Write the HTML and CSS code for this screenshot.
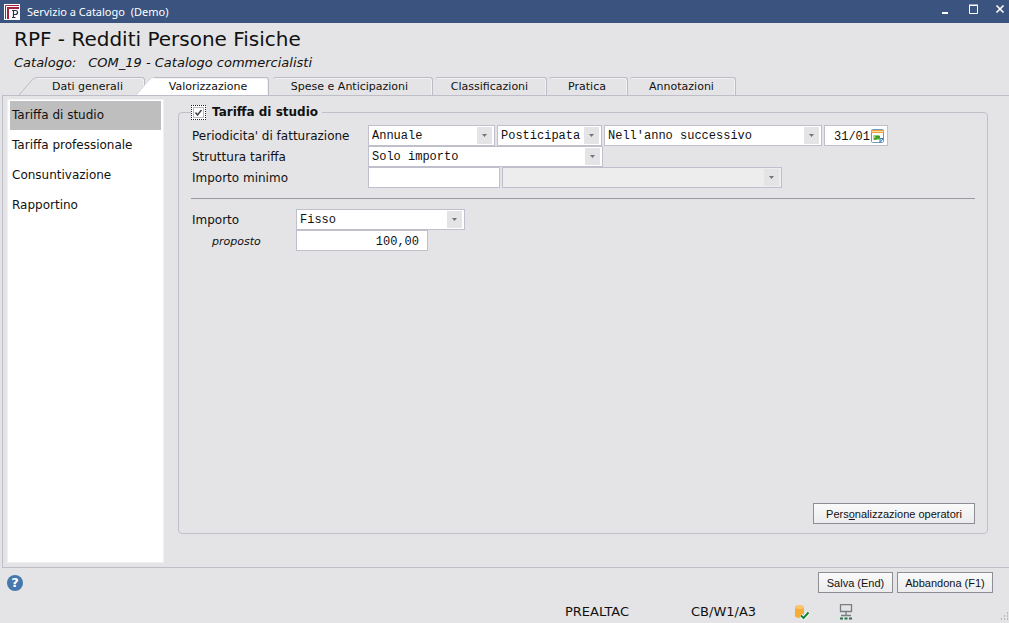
FILE: index.html
```html
<!DOCTYPE html>
<html lang="it">
<head>
<meta charset="utf-8">
<title>Servizio a Catalogo (Demo)</title>
<link rel="stylesheet" href="styles.css">
</head>
<body>
<header class="titlebar">
  <svg class="app-icon" viewBox="0 0 16 16" aria-hidden="true"><rect width="16" height="16" fill="#fff"/><path d="M1.500 15V1.500H15" fill="none" stroke="#a3243f"/><path d="M4 15V4h11" fill="none" stroke="#a3243f" stroke-width="2"/><rect x="6" y="5" width="10" height="11" fill="#fff"/><path d="M9.500 13.500v-7h2a2 2 0 0 1 0 4h-2M8 6.500h2M8 13.500h3.500" fill="none" stroke="#2d3550" stroke-width="1.200"/></svg>
  <span class="window-title">Servizio a Catalogo&nbsp; (Demo)</span>
  <div class="window-controls">
    <button type="button" aria-label="Riduci"><svg viewBox="0 0 10 10"><path d="M1 9h6" stroke="#fff" stroke-width="2"/></svg></button>
    <button type="button" aria-label="Ingrandisci"><svg viewBox="0 0 10 10"><path d="M1.500 1.500h8v8h-8zM1 1h9" fill="none" stroke="#fff"/></svg></button>
    <button type="button" aria-label="Chiudi"><svg viewBox="0 0 10 10"><path d="M1.500 1.500l7 7m0-7l-7 7" stroke="#fff" stroke-width="1.600"/></svg></button>
  </div>
</header>

<div class="heading">
  <h1>RPF - Redditi Persone Fisiche</h1>
  <p><span>Catalogo:</span><span>COM_19 - Catalogo commercialisti</span></p>
</div>

<nav class="tabs" role="tablist">
  <button type="button" role="tab" class="tab tab-first"><svg class="slope" viewBox="0 0 18 18"><path d="M0 18 13 3Q15.500 .5 18 .5V18z" fill="#e4e4e6"/><path d="M0 18 13 3Q15.500 .5 18 .5" fill="none" stroke="#bcbcc6"/></svg><span>Dati generali</span></button>
  <button type="button" role="tab" class="tab tab-active" aria-selected="true"><svg class="slope" viewBox="0 0 18 18"><path d="M0 18 13 3Q15.500 0 18 0V18z" fill="#fff"/><path d="M0 18 13 3Q15.500 .5 18 .5" fill="none" stroke="#d2d2d8"/></svg><span>Valorizzazione</span></button>
  <button type="button" role="tab" class="tab tab-spese"><span>Spese e Anticipazioni</span></button>
  <button type="button" role="tab" class="tab tab-class"><span>Classificazioni</span></button>
  <button type="button" role="tab" class="tab tab-pratica"><span>Pratica</span></button>
  <button type="button" role="tab" class="tab tab-note"><span>Annotazioni</span></button>
</nav>

<main class="panel">
  <nav class="side-list">
    <a href="#studio" class="selected">Tariffa di studio</a>
    <a href="#professionale">Tariffa professionale</a>
    <a href="#consuntivazione">Consuntivazione</a>
    <a href="#rapportino">Rapportino</a>
  </nav>
  <fieldset class="group">
    <legend><label><input type="checkbox" checked><span>Tariffa di studio</span></label></legend>
    <div class="row">
      <label for="periodicita">Periodicita' di fatturazione</label>
      <select id="periodicita" class="w-annual"><option>Annuale</option></select>
      <select class="w-mode" aria-label="Modalita'"><option>Posticipata</option></select>
      <select class="w-year" aria-label="Anno"><option>Nell'anno successivo</option></select>
      <span class="date-field">
        <input type="text" value="31/01" aria-label="Data">
        <button type="button" aria-label="Calendario"><svg viewBox="0 0 13 14"><rect x=".5" y=".5" width="12" height="13" rx="1" fill="#fff" stroke="#6b9bc4"/><path d="M0 1h13v3H0z" fill="#f0a03c"/><path d="M1 2.500h11" stroke="#ffd795"/><path d="M2 6h6v5H2z" fill="#a9d877"/><path d="M3 10h2V7.500h4M5 9h4" fill="none" stroke="#3f9a2c" stroke-width="1.300"/><path d="M12.500 9.500H9v4z" fill="#d4e8fa" stroke="#3c78b4"/></svg></button>
      </span>
    </div>
    <div class="row">
      <label for="struttura">Struttura tariffa</label>
      <select id="struttura" class="w-structure"><option>Solo importo</option></select>
    </div>
    <div class="row">
      <label for="minimo">Importo minimo</label>
      <input id="minimo" class="w-amount" type="text">
      <select class="w-minimum" aria-label="Tipo importo minimo" disabled><option></option></select>
    </div>
    <hr>
    <div class="row row-short">
      <label for="importo">Importo</label>
      <select id="importo" class="w-fixed"><option>Fisso</option></select>
    </div>
    <div class="row row-short">
      <label class="sub" for="proposto">proposto</label>
      <input id="proposto" class="w-amount number" type="text" value="100,00">
    </div>
    <button type="button" class="btn btn-operators">Pers<u>o</u>nalizzazione operatori</button>
  </fieldset>
</main>

<div class="actions">
  <button type="button" class="help" aria-label="Aiuto">?</button>
  <button type="button" class="btn btn-save">Salva (End)</button>
  <button type="button" class="btn btn-cancel">Abbandona (F1)</button>
</div>

<footer class="status">
  <span class="company">PREALTAC</span>
  <span class="station">CB/W1/A3</span>
  <svg class="db" viewBox="0 0 16 16" aria-hidden="true"><path d="M0 3v9c0 2.500 9 2.500 9 0V3z" fill="#f6ad38"/><ellipse cx="4.500" cy="3" rx="4.500" ry="2" fill="#fac46a"/><path d="M6 11.500l2.500 2.500 5-5.500" fill="none" stroke="#fff" stroke-width="4"/><path d="M6 11.500l2.500 2.500 5-5.500" fill="none" stroke="#158432" stroke-width="2"/></svg>
  <svg class="net" viewBox="0 0 14 16" aria-hidden="true"><path d="M1.500 .5h11v7h-11zM7 8v3M2 11.500h10" fill="none" stroke="#777d80" stroke-width="1.300"/><path d="M1 14.500h12" stroke="#28744f" stroke-width="2" stroke-dasharray="3 1.500"/></svg>
  <svg class="grip" viewBox="0 0 9 9" aria-hidden="true"><path d="M7 1h2M4 4h2M7 4h2M1 7h2M4 7h2M7 7h2" stroke="#b4b4ba" stroke-width="2" stroke-dasharray="1 1"/></svg>
</footer>
</body>
</html>
```
FILE: styles.css
```css
* { box-sizing: border-box; }

body {
  margin: 0;
  min-height: 100vh;
  display: flex;
  flex-direction: column;
  background: #e4e4e6;
  color: #111;
  font: 12px/15px "DejaVu Sans", sans-serif;
}

button, input, select { font: inherit; color: inherit; margin: 0; }
svg { display: block; }

.titlebar {
  display: flex;
  align-items: center;
  height: 23px;
  padding: 0 4px;
  background: #3a537f;
  color: #fff;
}
.app-icon { width: 16px; height: 16px; }
.window-title { margin-left: 7px; font: 11px/16px "Noto Sans", sans-serif; }
.window-controls { display: flex; gap: 17px; margin-left: auto; padding-bottom: 6px; }
.window-controls button { width: 10px; height: 10px; padding: 0; border: 0; background: none; }
.window-controls svg { width: 10px; height: 10px; }

.heading { padding: 4px 14px 0; }
h1 { margin: 0; font-size: 20px; font-weight: 400; line-height: 24px; }
.heading p { display: flex; gap: 12px; margin: 4px 0 6px; font-size: 13px; font-style: italic; line-height: 16px; }

.tabs { display: flex; height: 18px; padding-left: 19px; }
.tab { display: flex; height: 18px; padding: 0; border: 0; background: none; font-size: 11px; line-height: 17px; }
.tab span {
  flex: 1;
  height: 18px;
  padding-right: 6px;
  border: 1px solid #bcbcc6;
  border-width: 1px 1px 0 0;
  border-radius: 0 3px 0 0;
  box-shadow: inset -1px 1px 0 #f2f2f4;
}
.slope { flex: none; width: 18px; height: 18px; }
.tab-first { width: 126px; }
.tab-active { width: 133px; margin: 0 2px 0 -9px; position: relative; z-index: 1; }
.tab-active span { background: #fff; }
.tab-spese { width: 162px; }
.tab-class { width: 114px; }
.tab-pratica { width: 81px; }
.tab-note { width: 108px; }
.tab-spese span, .tab-class span, .tab-pratica span, .tab-note span { margin-left: 2px; border-radius: 3px 3px 0 0; }
.tab-class span, .tab-pratica span, .tab-note span { padding-right: 2px; }

.panel {
  flex: 1;
  display: flex;
  gap: 14px;
  margin-left: 2px;
  padding: 3px 21px 4px 4px;
  border: 1px solid #bebec8;
  border-right: 0;
}
.side-list { flex: none; width: 157px; padding: 1px 2px; background: #fff; border: 1px solid #f0f0f2; }
.side-list a { display: block; padding-left: 2px; line-height: 28px; margin-bottom: 1px; border-bottom: 1px solid transparent; color: inherit; text-decoration: none; }
.side-list .selected { background: #bebebe; }

.group {
  flex: 1;
  min-width: 0;
  display: flex;
  flex-direction: column;
  margin: 6px 0 29px;
  padding: 5px 12px 9px;
  border: 1px solid #c0c0ca;
  border-radius: 4px;
}
legend { height: 15px; padding: 0 4px 0 0; font-weight: 700; }
legend label { display: flex; gap: 6px; }
legend input {
  appearance: none;
  width: 15px;
  height: 15px;
  border: 1px dotted #222;
  background: #fff url("data:image/svg+xml,%3Csvg xmlns='http://www.w3.org/2000/svg' width='13' height='13'%3E%3Cpath d='M1.500 1.500h10v10h-10z' fill='none' stroke='%23b8b8c0'/%3E%3Cpath d='M3.500 6.500l2 2.500 4-5' fill='none' stroke='%23444' stroke-width='1.500'/%3E%3C/svg%3E") center no-repeat;
}

.row { display: flex; gap: 2px; height: 21px; }
.row > label { flex: none; width: 175px; padding-left: 1px; line-height: 23px; white-space: nowrap; }
.row-short > label { width: 103px; }
.row > .sub { padding-left: 21px; font-size: 11px; font-style: italic; }

.row select, .row input {
  height: 21px;
  padding: 2px 3px 0;
  border: 1px solid #c0c0cc;
  border-radius: 0;
  background: #fff;
  font: 12px/17px "Liberation Mono", monospace;
}
.row select {
  appearance: none;
  background: #fff url("data:image/svg+xml,%3Csvg xmlns='http://www.w3.org/2000/svg' width='17' height='19'%3E%3Cpath d='M0 1h15v17H0z' fill='%23e4e4e6'/%3E%3Cpath d='M5 8h5L7.500 11z' fill='%23737378'/%3E%3C/svg%3E") right center no-repeat;
}
.row select:disabled { background-color: #ededee; opacity: 1; }
.w-annual { width: 127px; }
.w-mode { width: 105px; }
.w-year { width: 218px; }
.w-structure { width: 235px; }
.row .w-amount { width: 132px; }
.w-minimum { width: 280px; }
.w-fixed { width: 169px; }
.row .number { padding-right: 8px; text-align: right; }
.date-field { display: flex; width: 64px; border: 1px solid #c0c0cc; background: #fff; }
.row .date-field input { flex: 1; min-width: 0; height: 19px; padding: 2px 0 0 9px; border: 0; }
.date-field button { width: 16px; padding: 0; border: 0; background: none; }
.date-field svg { width: 13px; height: 14px; }

hr { width: 100%; height: 1px; margin: 10px 0; border: 0; background: #9898a0; }

.btn {
  height: 21px;
  padding: 2px 0 0;
  border: 1px solid #8e8e96;
  background: linear-gradient(#fafafa, #ececee);
  font: 11px/17px "Liberation Sans", sans-serif;
}
.btn-operators { width: 162px; margin: auto 0 0 auto; }

.actions { display: flex; gap: 4px; padding: 4px 16px 0 7px; }
.help {
  width: 16px;
  height: 16px;
  margin: 3px auto 0 0;
  padding: 0;
  border: 0;
  border-radius: 50%;
  background: #4678ae;
  color: #fff;
  font: 700 13px/16px "DejaVu Sans", sans-serif;
}
.btn-save { width: 75px; }
.btn-cancel { width: 96px; }

.status { position: relative; display: flex; justify-content: flex-end; align-items: center; height: 30px; padding: 7px 156px 0 0; font-size: 13px; }
.company { width: 126px; }
.station { width: 104px; }
.db { width: 16px; height: 16px; margin-right: 28px; }
.net { width: 14px; height: 16px; }
.grip { position: absolute; right: 0; bottom: 2px; width: 9px; height: 9px; }
```
